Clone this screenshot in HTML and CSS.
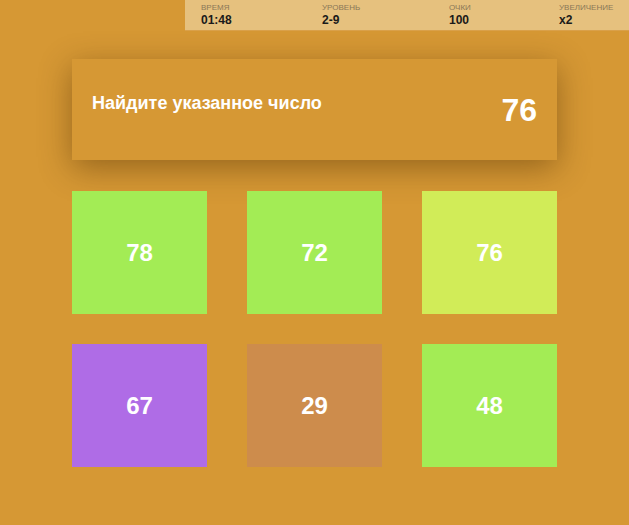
FILE: index.html
```html
<!DOCTYPE html>
<html lang="ru">
<head>
<meta charset="utf-8">
<link rel="stylesheet" href="styles.css">
</head>
<body>
<div class="topline">
  <div class="stats">
    <div class="stat s1"><div class="lbl">ВРЕМЯ</div><div class="val">01:48</div></div>
    <div class="stat s2"><div class="lbl">УРОВЕНЬ</div><div class="val">2-9</div></div>
    <div class="stat s3"><div class="lbl">ОЧКИ</div><div class="val">100</div></div>
    <div class="stat s4"><div class="lbl">УВЕЛИЧЕНИЕ</div><div class="val">x2</div></div>
  </div>
</div>
<div class="main">
  <div class="task">
    <div class="task-text">Найдите указанное число</div>
    <div class="task-num">76</div>
  </div>
  <div class="grid">
    <div class="tile green">78</div>
    <div class="tile green">72</div>
    <div class="tile lime">76</div>
    <div class="tile purple">67</div>
    <div class="tile brown">29</div>
    <div class="tile green">48</div>
  </div>
</div>
</body>
</html>
```
FILE: styles.css
```css
html, body {
  margin: 0;
  padding: 0;
  background: #d69834;
  font-family: "Liberation Sans", Arial, sans-serif;
  width: 629px;
  height: 525px;
  overflow: hidden;
}
.topline {
  display: flex;
  justify-content: flex-end;
}
.stats {
  width: 444px;
  height: 30px;
  background: #e6c17e;
  border-bottom: 1px solid #d9a04a;
  display: flex;
}
.stat {
  padding-top: 3px;
}
.s1 { width: 121px; padding-left: 16px; }
.s2 { width: 127px; }
.s3 { width: 110px; }
.s4 { flex: 1; }
.lbl {
  font-size: 8px;
  line-height: 9px;
  color: #8a7858;
}
.val {
  font-size: 12px;
  line-height: 14px;
  font-weight: bold;
  color: #1a1a1a;
  margin-top: 1px;
}
.main {
  padding: 28px 0 0 72px;
  width: 485px;
}
.task {
  height: 101px;
  background: #d69834;
  box-shadow: 0 8px 30px rgba(70, 40, 0, 0.45);
  display: flex;
  align-items: center;
  justify-content: space-between;
  padding: 0 20px;
}
.task-text {
  color: #fff;
  font-weight: bold;
  font-size: 18px;
  margin-top: -12px;
}
.task-num {
  color: #fff;
  font-weight: bold;
  font-size: 32px;
  margin-top: 2px;
}
.grid {
  margin-top: 31px;
  display: grid;
  grid-template-columns: repeat(3, 135px);
  grid-auto-rows: 123px;
  column-gap: 40px;
  row-gap: 30px;
}
.tile {
  display: flex;
  align-items: center;
  justify-content: center;
  color: #fff;
  font-weight: bold;
  font-size: 24px;
}
.green { background: #a3ec55; }
.lime { background: #d1ec58; }
.purple { background: #af6ce6; }
.brown { background: #cd8c4c; }
```
